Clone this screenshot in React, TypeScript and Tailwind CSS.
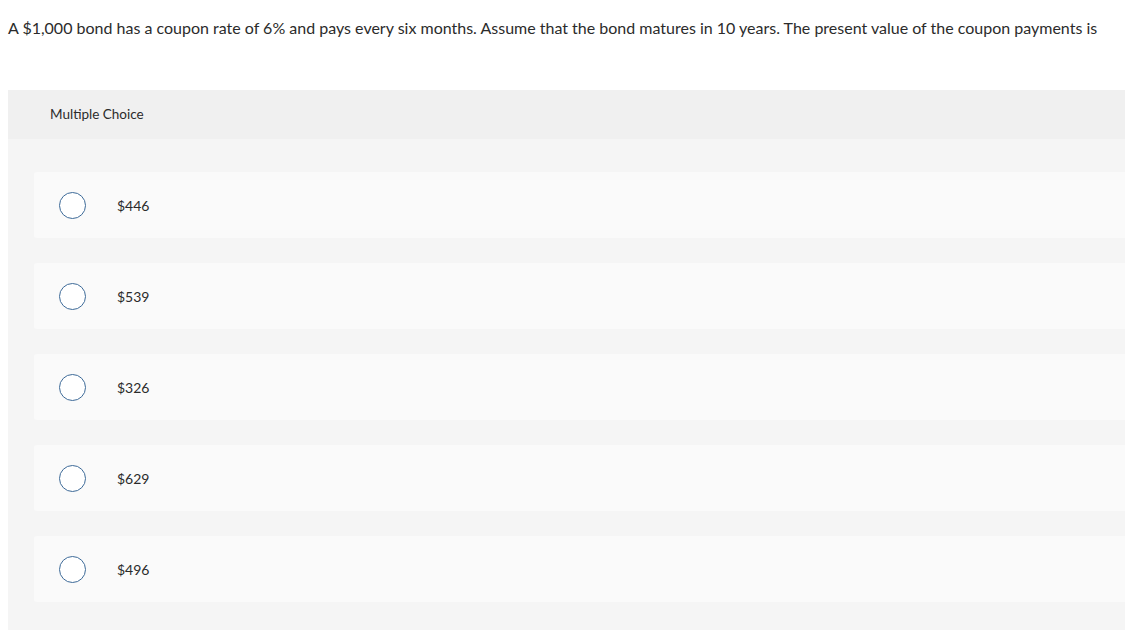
const options = ["$446", "$539", "$326", "$629", "$496"];

export default function App() {
  return (
    <div className="min-h-[630px] bg-white overflow-hidden font-['Lato',sans-serif] text-[#2b2b2b]">
      <p className="pl-2 pt-[18px] text-[16px] leading-5 whitespace-nowrap">
        A $1,000 bond has a coupon rate of 6% and pays every six months. Assume that the bond matures in 10 years. The
        present value of the coupon payments is
      </p>

      <div className="ml-2 mt-[52px]">
        {/* header */}
        <div className="h-[49px] bg-[#f0f0f0] flex items-center pl-[42px] text-[13.5px]">
          Multiple Choice
        </div>

        {/* choices */}
        <div className="bg-[#f5f5f5] pt-[33px] pl-[26px] pb-10 flex flex-col gap-[25px]">
          {options.map((opt) => (
            <div key={opt} className="h-[66px] bg-[#fafafa] rounded-l-[3px] flex items-center">
              <span className="ml-[25px] w-[27px] h-[27px] rounded-full border-[1.5px] border-[#3d6a98] bg-white" />
              <span className="ml-[31px] text-[14px]">{opt}</span>
            </div>
          ))}
        </div>
      </div>
    </div>
  );
}
